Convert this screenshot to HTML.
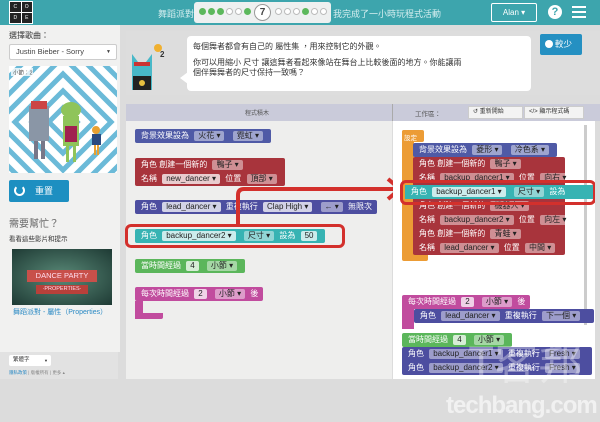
<!DOCTYPE html>
<html><head><meta charset="utf-8"><style>
*{margin:0;padding:0;box-sizing:border-box}
body{width:600px;height:422px;overflow:hidden;background:#dcdcdc;font-family:"Liberation Sans","Noto Sans CJK TC",sans-serif;position:relative;font-size:8px;color:#333}
.a{position:absolute}
.blk{position:absolute;color:#fff;font-size:8px;height:14px;line-height:14px;padding:0 5px 0 6px;white-space:nowrap;border-radius:2px}
.f{display:inline-block;background:rgba(255,255,255,.45);color:#222;border-radius:2px;padding:0 4px;line-height:10px;height:10px;margin:0 3px;font-size:8px}
.fw{background:rgba(255,255,255,.75)}
</style></head><body>
<!-- header -->
<div class="a" style="left:0;top:0;width:600px;height:25px;background:#3da5ad"></div>
<div class="a" style="left:9px;top:1px;width:24px;height:23px;background:#fff;display:grid;grid-template-columns:1fr 1fr;gap:1px;padding:1px">
<div style="background:#222;color:#fff;font-size:5px;text-align:center;line-height:10px">C</div><div style="background:#222;color:#fff;font-size:5px;text-align:center;line-height:10px">O</div><div style="background:#222;color:#fff;font-size:5px;text-align:center;line-height:10px">D</div><div style="background:#222;color:#fff;font-size:5px;text-align:center;line-height:10px">E</div></div>
<div class="a" style="left:158px;top:7px;color:#d6eef0;font-size:9px">舞蹈派對</div>
<div class="a" style="left:194px;top:2px;width:137px;height:21px;background:#eef0f0;border-radius:3px"></div>
<div class="a" style="left:199px;top:8px;display:flex;gap:2px">
<i style="width:7px;height:7px;border-radius:50%;background:#5cb85c"></i><i style="width:7px;height:7px;border-radius:50%;background:#5cb85c"></i><i style="width:7px;height:7px;border-radius:50%;background:#5cb85c"></i><i style="width:7px;height:7px;border-radius:50%;border:1px solid #bbb;background:#fff"></i><i style="width:7px;height:7px;border-radius:50%;border:1px solid #bbb;background:#fff"></i><i style="width:7px;height:7px;border-radius:50%;background:#5cb85c"></i></div>
<div class="a" style="left:254px;top:4px;width:17px;height:17px;border-radius:50%;border:1px solid #999;background:#fff;text-align:center;line-height:15px;font-size:10px;font-weight:bold;color:#444">7</div>
<div class="a" style="left:275px;top:8px;display:flex;gap:2px">
<i style="width:7px;height:7px;border-radius:50%;border:1px solid #bbb;background:#fff"></i><i style="width:7px;height:7px;border-radius:50%;border:1px solid #bbb;background:#fff"></i><i style="width:7px;height:7px;border-radius:50%;border:1px solid #bbb;background:#fff"></i><i style="width:7px;height:7px;border-radius:50%;background:#5cb85c"></i><i style="width:7px;height:7px;border-radius:50%;border:1px solid #bbb;background:#fff"></i><i style="width:7px;height:7px;border-radius:50%;border:1px solid #bbb;background:#fff"></i></div>
<div class="a" style="left:333px;top:7px;color:#d6eef0;font-size:9px">我完成了一小時玩程式活動</div>
<div class="a" style="left:491px;top:3px;width:46px;height:19px;border:1px solid #fff;border-radius:2px;color:#fff;font-size:8px;line-height:17px;text-align:center">Alan ▾</div>
<div class="a" style="left:548px;top:5px;width:14px;height:14px;border-radius:50%;background:#fff;color:#3da5ad;font-weight:bold;font-size:11px;text-align:center;line-height:14px">?</div>
<div class="a" style="left:572px;top:6px;width:14px;height:2px;background:#fff;box-shadow:0 5px 0 #fff,0 10px 0 #fff"></div>
<!-- left panel -->
<div class="a" style="left:0;top:25px;width:120px;height:327px;background:#f1f1f0"></div>
<div class="a" style="left:9px;top:30px;font-size:8px;color:#333">選擇歌曲：</div>
<div class="a" style="left:9px;top:44px;width:108px;height:16px;background:#fff;border:1px solid #ccc;border-radius:2px;font-size:7.5px;line-height:14px;padding-left:6px;color:#444">Justin Bieber - Sorry<span style="float:right;margin-right:5px;font-size:5px">▼</span></div>
<svg class="a" style="left:9px;top:66px" width="108" height="107" viewBox="0 0 108 107">
<rect width="108" height="107" fill="#fff"/>
<g transform="translate(54,56) rotate(45)" fill="none" stroke="#6bbad8" stroke-width="5">
<rect x="-70" y="-70" width="140" height="140"/><rect x="-58" y="-58" width="116" height="116"/><rect x="-46" y="-46" width="92" height="92"/><rect x="-34" y="-34" width="68" height="68"/><rect x="-22" y="-22" width="44" height="44"/><rect x="-10" y="-10" width="20" height="20"/></g>
<rect x="20" y="40" width="20" height="35" fill="#8a96a6"/><rect x="22" y="35" width="16" height="8" fill="#c44"/><rect x="25" y="75" width="4" height="18" fill="#778"/><rect x="32" y="75" width="4" height="18" fill="#778"/>
<ellipse cx="62" cy="44" rx="10" ry="8" fill="#8fc45a"/><rect x="54" y="50" width="16" height="30" fill="#8fc45a"/><rect x="56" y="60" width="12" height="16" fill="#a02050"/><rect x="57" y="80" width="3" height="16" fill="#8fc45a"/><rect x="64" y="80" width="3" height="16" fill="#8fc45a"/>
<circle cx="87" cy="64" r="4" fill="#e8a030"/><rect x="83" y="68" width="9" height="11" fill="#2a4a80"/><rect x="85" y="79" width="2" height="10" fill="#e8a030"/><rect x="88" y="79" width="2" height="10" fill="#e8a030"/>
<rect x="2" y="2" width="22" height="8" fill="#fff" opacity=".8"/><text x="4" y="8.5" font-size="5.5" fill="#555" font-family="Liberation Sans,Noto Sans CJK TC,sans-serif">小節：2</text>
</svg>
<div class="a" style="left:9px;top:180px;width:60px;height:22px;background:#1d8fc1;border-radius:2px;color:#fff;font-size:9px;line-height:22px;padding-left:26px">重置</div>
<div class="a" style="left:14px;top:185px;width:11px;height:11px;border:2.5px solid #fff;border-top-color:transparent;border-radius:50%"></div>
<div class="a" style="left:9px;top:215px;font-size:10px;color:#666">需要幫忙？</div>
<div class="a" style="left:9px;top:233px;font-size:6.5px;color:#333">看看這些影片和提示</div>
<div class="a" style="left:12px;top:249px;width:100px;height:56px;background:radial-gradient(#5a8a78,#1e3a34);text-align:center">
<div style="margin:21px auto 0;width:70px;height:12px;background:#c8504a;color:#fde;font-size:7.5px;line-height:12px">DANCE PARTY</div>
<div style="margin:3px auto 0;width:52px;height:9px;background:#b8403a;color:#fde;font-size:5.5px;line-height:9px">·PROPERTIES·</div></div>
<div class="a" style="left:13px;top:307px;font-size:7px;color:#2b8ac4">舞蹈派對 - 屬性（Properties）</div>
<div class="a" style="left:0;top:352px;width:118px;height:27px;background:#e2e2e2"></div>
<div class="a" style="left:9px;top:355px;width:42px;height:11px;background:#fff;border-radius:2px;font-size:5.5px;line-height:11px;padding-left:4px">繁體字<span style="float:right;margin-right:3px;font-size:4px">▼</span></div>
<div class="a" style="left:9px;top:370px;font-size:4.5px;color:#888"><span style="color:#2b8ac4">隱私政策</span> | 版權所有 | 更多 ▴</div>
<!-- instructions -->
<div class="a" style="left:126px;top:31px;width:474px;height:64px;background:#ddd"></div>
<div class="a" style="left:187px;top:36px;width:344px;height:55px;background:#fff;border-radius:4px;font-size:8px;color:#333;line-height:13px;padding:4px 6px">每個舞者都會有自己的 屬性集 ，用來控制它的外觀。<br><span style="line-height:20px">你可以用縮小 尺寸 讓這舞者看起來像站在舞台上比較後面的地方。你能讓兩</span><br><span style="position:relative;top:-7px">個伴舞舞者的尺寸保持一致嗎？</span></div>
<div class="a" style="left:180px;top:72px;width:0;height:0;border-top:6px solid transparent;border-bottom:6px solid transparent;border-right:8px solid #fff"></div>
<svg class="a" style="left:130px;top:40px" width="50" height="50"><polygon points="2,14 8,22 16,22 22,14 22,50 2,50" fill="#48b8c8"/><rect x="4" y="22" width="16" height="4" fill="#c33"/><rect x="3" y="36" width="18" height="14" fill="#222"/><circle cx="12" cy="43" r="3" fill="#e8c040"/><circle cx="28" cy="8" r="4" fill="#f0b030"/><text x="30" y="17" font-size="8" fill="#333" font-weight="bold">2</text></svg>
<div class="a" style="left:540px;top:34px;width:42px;height:21px;background:#2590c2;border-radius:2px;color:#fff;font-size:8.5px;line-height:21px;padding-left:15px">較少</div>
<div class="a" style="left:545px;top:40px;width:8px;height:8px;border-radius:50%;background:#fff"></div>
<!-- blocks header -->
<div class="a" style="left:126px;top:104px;width:474px;height:17px;background:#cacbda"></div>
<div class="a" style="left:392px;top:104px;width:1px;height:17px;background:#aaa"></div>
<div class="a" style="left:245px;top:108px;font-size:6px;color:#555">程式積木</div>
<div class="a" style="left:415px;top:108px;font-size:6.5px;color:#555">工作區：</div>
<div class="a" style="left:468px;top:106px;width:55px;height:13px;background:#f3f3f3;border:1px solid #ccc;font-size:6px;line-height:11px;padding-left:4px">↺ 重新開始</div>
<div class="a" style="left:524px;top:106px;width:60px;height:13px;background:#f3f3f3;border:1px solid #ccc;font-size:6px;line-height:11px;padding-left:4px">&lt;/&gt; 顯示程式碼</div>
<!-- toolbox -->
<div class="a" style="left:126px;top:121px;width:266px;height:258px;background:#eeeeed"></div>
<div class="blk" style="left:135px;top:129px;background:#4f5aa6">背景效果設為 <span class="f">火花 ▾</span> <span class="f">霓虹 ▾</span></div>
<div class="blk" style="left:135px;top:158px;height:28px;background:#a8343c;line-height:14px">角色 創建一個新的 <span class="f">鴨子 ▾</span><br>名稱 <span class="f fw">new_dancer ▾</span> 位置 <span class="f">頂部 ▾</span></div>
<div class="blk" style="left:135px;top:200px;background:#4d4ea0">角色 <span class="f fw">lead_dancer ▾</span> 重複執行 <span class="f fw">Clap High ▾</span> <span class="f">← ▾</span> 無限次</div>
<div class="blk" style="left:135px;top:229px;background:#37b3b3">角色 <span class="f fw">backup_dancer2 ▾</span> <span class="f">尺寸 ▾</span> 設為 <span class="f fw">50</span></div>
<div class="a" style="left:125px;top:224px;width:220px;height:24px;border:3px solid #d3302c;border-radius:6px"></div>
<div class="blk" style="left:135px;top:259px;background:#5bb65b">當時間經過 <span class="f fw">4</span> <span class="f">小節 ▾</span></div>
<div class="blk" style="left:135px;top:287px;background:#c14c9e">每次時間經過 <span class="f fw">2</span> <span class="f">小節 ▾</span> 後</div>
<div class="a" style="left:135px;top:301px;width:8px;height:18px;background:#c14c9e"></div>
<div class="a" style="left:135px;top:313px;width:28px;height:6px;background:#c14c9e;border-radius:0 0 2px 2px"></div>
<!-- red arrow -->
<svg class="a" style="left:230px;top:175px" width="180" height="60"><path d="M8 50 V20 Q8 14 14 14 H165" fill="none" stroke="#d3302c" stroke-width="4"/><path d="M158 4 L170 14 L158 24" fill="none" stroke="#d3302c" stroke-width="4"/></svg>
<!-- workspace -->
<div class="a" style="left:393px;top:121px;width:202px;height:258px;background:#fff;overflow:hidden">
<div class="a" style="left:191px;top:4px;width:3px;height:200px;background:#ccc"></div>
<div class="a" style="left:9px;top:9px;width:12px;height:130px;background:#ec9c35;border-radius:2px"></div>
<div class="a" style="left:9px;top:9px;width:22px;height:12px;background:#ec9c35;color:#fff;font-size:6.5px;padding:2px;border-radius:2px">設定</div>
<div class="a" style="left:9px;top:131px;width:26px;height:9px;background:#ec9c35;border-radius:2px"></div>
<div class="blk" style="left:20px;top:22px;background:#4f5aa6">背景效果設為 <span class="f">菱形 ▾</span> <span class="f">冷色系 ▾</span></div>
<div class="blk" style="left:20px;top:36px;width:152px;height:98px;background:#a8343c;line-height:14px">角色 創建一個新的 <span class="f">鴨子 ▾</span><br>名稱 <span class="f">backup_dancer1 ▾</span> 位置 <span class="f">向右 ▾</span><br><br>角色 創建一個新的 <span class="f">機器人 ▾</span><br>名稱 <span class="f">backup_dancer2 ▾</span> 位置 <span class="f">向左 ▾</span><br>角色 創建一個新的 <span class="f">青蛙 ▾</span><br>名稱 <span class="f">lead_dancer ▾</span> 位置 <span class="f">中間 ▾</span></div>
<div class="blk" style="left:12px;top:64px;width:190px;background:#37b3b3;border-radius:0">角色 <span class="f fw">backup_dancer1 ▾</span> <span class="f">尺寸 ▾</span> 設為</div>
<div class="a" style="left:7px;top:59px;width:196px;height:25px;border:3px solid #d3302c;border-radius:6px"></div>
<div class="blk" style="left:9px;top:174px;background:#c14c9e">每次時間經過 <span class="f fw">2</span> <span class="f">小節 ▾</span> 後</div>
<div class="a" style="left:9px;top:184px;width:12px;height:24px;background:#c14c9e"></div>
<div class="blk" style="left:21px;top:188px;width:180px;background:#4d4ea0">角色 <span class="f">lead_dancer ▾</span> 重複執行 <span class="f">下一個 ▾</span></div>
<div class="blk" style="left:9px;top:212px;background:#5bb65b">當時間經過 <span class="f fw">4</span> <span class="f">小節 ▾</span></div>
<div class="blk" style="left:9px;top:226px;width:190px;height:28px;background:#4d4ea0;line-height:14px">角色 <span class="f">backup_dancer1 ▾</span> 重複執行 <span class="f">Fresh ▾</span><br>角色 <span class="f">backup_dancer2 ▾</span> 重複執行 <span class="f">Fresh ▾</span></div>
</div>
<!-- watermark -->
<div class="a" style="left:446px;top:393px;width:154px;overflow:hidden;font-size:24px;font-weight:bold;color:rgba(255,255,255,.6);letter-spacing:-1px;line-height:26px;white-space:nowrap">techbang.com</div>
<div class="a" style="left:468px;top:335px;width:132px;overflow:hidden;white-space:nowrap;font-size:44px;color:rgba(255,255,255,.35);line-height:50px;font-family:'Noto Sans CJK TC',sans-serif">T客邦</div>
</body></html>
